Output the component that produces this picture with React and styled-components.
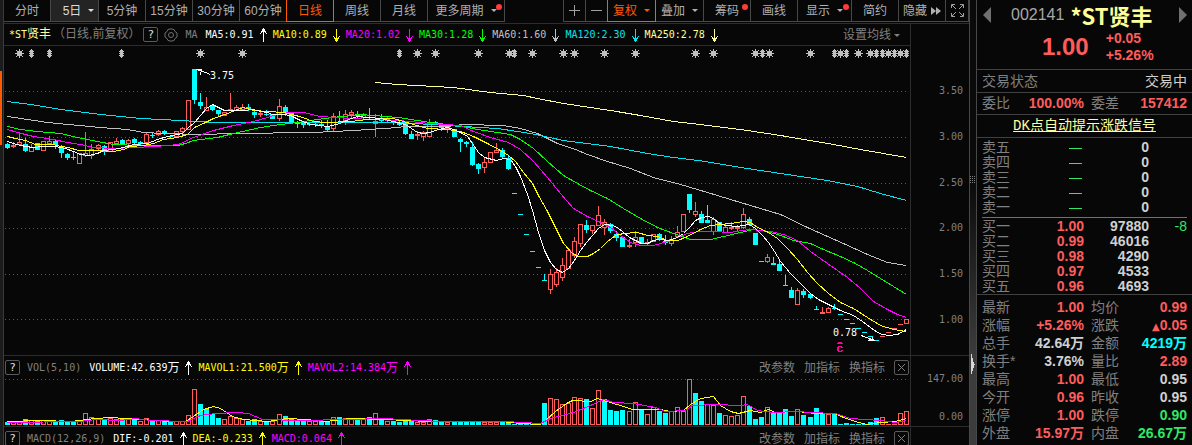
import React from "react";
import styled, { createGlobalStyle } from "styled-components";

const UP = "#ff5c5c";
const DOWN = "#00ffff";

// direction, high, body top, body bottom, low, volume top, volume direction (when it differs)
const candles = [
  ["d", 143, 144, 148, 149, 422], ["u", 142, 145, 147, 148, 421], ["u", 134, 142, 145, 145, 422],
  ["d", 138, 144, 151, 152, 419], ["u", 144, 147, 152, 152, 420], ["d", 143, 143, 150, 150, 421],
  ["u", 141, 141, 151, 151, 420], ["u", 136, 141, 144, 144, 421], ["d", 140, 141, 145, 149, 421],
  ["d", 145, 146, 153, 158, 420], ["d", 153, 154, 158, 160, 421], ["d", 152, 157, 158, 160, 422],
  ["u", 153, 153, 164, 164, 420], ["u", 132, 153, 156, 157, 413], ["u", 144, 149, 156, 159, 417],
  ["u", 144, 145, 149, 150, 418], ["d", 145, 146, 152, 155, 419], ["u", 142, 142, 152, 152, 418],
  ["u", 138, 141, 144, 145, 419], ["d", 139, 140, 144, 145, 419], ["u", 139, 140, 144, 145, 419],
  ["d", 138, 139, 143, 144, 419], ["d", 141, 142, 144, 145, 421, "u"], ["u", 133, 134, 143, 143, 418],
  ["d", 133, 135, 136, 138, 421], ["u", 130, 131, 135, 136, 420], ["d", 130, 131, 134, 135, 421],
  ["d", 135, 136, 137, 138, 422], ["u", 131, 131, 137, 137, 421], ["u", 127, 128, 132, 133, 421],
  ["u", 100, 100, 130, 130, 415], ["d", 69, 69, 100, 104, 389, "u"], ["d", 93, 102, 106, 109, 404],
  ["u", 97, 107, 111, 111, 409, "d"], ["d", 104, 105, 110, 111, 414], ["d", 110, 110, 114, 116, 418],
  ["u", 112, 112, 116, 116, 419], ["u", 93, 109, 111, 111, 416], ["u", 105, 107, 111, 111, 418],
  ["u", 104, 107, 110, 110, 419], ["d", 104, 107, 109, 111, 421], ["d", 111, 112, 115, 118, 419],
  ["u", 110, 113, 115, 117, 421], ["d", 110, 114, 115, 116, 421], ["d", 114, 114, 119, 119, 421, "u"],
  ["u", 99, 106, 119, 121, 414], ["d", 105, 107, 113, 116, 416], ["d", 113, 113, 123, 123, 419],
  ["d", 121, 123, 124, 128, 420], ["d", 121, 123, 125, 128, 421], ["d", 122, 124, 125, 126, 421, "u"],
  ["d", 122, 124, 125, 127, 421, "u"], ["d", 120, 124, 125, 128, 421], ["d", 120, 127, 130, 131, 421],
  ["u", 113, 116, 129, 131, 417], ["d", 111, 116, 117, 123, 417], ["u", 110, 114, 121, 125, 418],
  ["u", 110, 112, 115, 118, 418], ["d", 111, 114, 116, 119, 418], ["u", 113, 115, 118, 119, 419],
  ["d", 108, 117, 118, 120, 417], ["u", 114, 121, 124, 137, 413], ["d", 114, 119, 121, 123, 418],
  ["u", 117, 119, 121, 122, 421], ["d", 120, 121, 123, 125, 421], ["d", 120, 122, 125, 126, 422],
  ["d", 122, 123, 134, 135, 420], ["d", 131, 134, 139, 139, 421], ["u", 131, 134, 136, 140, 422],
  ["u", 131, 132, 137, 141, 422], ["u", 119, 122, 137, 137, 419], ["d", 121, 122, 124, 125, 420],
  ["d", 123, 124, 128, 131, 422], ["u", 125, 127, 129, 133, 422], ["d", 129, 129, 137, 137, 422],
  ["d", 138, 139, 142, 152, 422], ["d", 141, 142, 144, 147, 422], ["d", 142, 147, 165, 166, 422],
  ["d", 163, 164, 169, 174, 422], ["u", 158, 162, 168, 173, 422], ["u", 152, 152, 163, 163, 422],
  ["u", 143, 150, 153, 153, 422], ["d", 148, 150, 157, 158, 422], ["d", 156, 158, 169, 170, 423],
  ["d", 193, 193, 194, 194, 424], ["d", 214, 214, 215, 215, 424], ["d", 234, 234, 235, 235, 424],
  ["d", 251, 251, 252, 252, 424], ["d", 267, 267, 268, 268, 424], ["d", 274, 280, 281, 281, 403],
  ["u", 269, 274, 290, 294, 398], ["u", 268, 272, 285, 287, 399], ["u", 258, 265, 278, 281, 404],
  ["u", 250, 250, 269, 269, 403], ["u", 237, 241, 256, 258, 397], ["u", 224, 224, 244, 247, 398],
  ["d", 220, 225, 230, 233, 399], ["u", 225, 225, 231, 234, 408], ["u", 206, 215, 226, 226, 390],
  ["u", 219, 222, 228, 235, 399, "d"], ["d", 223, 224, 231, 233, 410], ["d", 231, 234, 238, 241, 411],
  ["d", 237, 237, 247, 247, 410], ["u", 239, 245, 247, 248, 411], ["u", 231, 237, 243, 247, 402],
  ["d", 237, 237, 244, 244, 410], ["u", 239, 242, 244, 245, 414], ["u", 234, 234, 242, 242, 407],
  ["d", 233, 234, 240, 241, 411], ["d", 235, 241, 243, 245, 413], ["u", 236, 239, 244, 246, 411],
  ["u", 226, 232, 237, 238, 407], ["u", 214, 214, 232, 232, 411], ["d", 194, 194, 210, 213, 379, "u"],
  ["u", 202, 211, 215, 217, 393, "d"], ["d", 211, 214, 223, 223, 401], ["d", 205, 220, 223, 223, 404, "u"],
  ["u", 217, 219, 232, 235, 405], ["d", 222, 222, 231, 231, 413], ["u", 224, 227, 233, 233, 415],
  ["u", 222, 227, 229, 230, 416], ["u", 225, 227, 229, 231, 415], ["u", 208, 214, 228, 229, 396],
  ["d", 217, 219, 225, 226, 406], ["d", 233, 233, 245, 245, 419], ["d", 261, 261, 262, 262, 417],
  ["u", 254, 257, 262, 263, 407], ["d", 257, 263, 265, 265, 412], ["d", 261, 264, 271, 271, 412],
  ["d", 275, 285, 286, 286, 409], ["d", 287, 290, 298, 298, 416], ["u", 288, 290, 305, 305, 409],
  ["d", 289, 291, 295, 298, 415], ["d", 293, 294, 298, 299, 417], ["d", 306, 309, 310, 310, 408],
  ["u", 307, 312, 314, 314, 413, "d"], ["u", 307, 308, 313, 313, 414], ["d", 304, 308, 309, 310, 413],
  ["d", 314, 314, 315, 315, 424], ["d", 319, 319, 320, 320, 423], ["d", 323, 323, 324, 324, 424],
  ["d", 328, 328, 329, 329, 424], ["d", 332, 332, 333, 333, 424], ["d", 336, 336, 337, 337, 422],
  ["d", 340, 340, 341, 341, 418], ["u", 336, 336, 337, 337, 417], ["u", 332, 332, 333, 333, 424],
  ["u", 328, 328, 329, 329, 424], ["u", 324, 324, 325, 325, 413], ["u", 319, 319, 324, 324, 411],
];

const priceLines = [
  ["#ffff99", "375,82 397,84 453,87 490,92 523,95 537,98 563,103 610,110 640,115 673,121 700,124 747,130 780,135 833,144 860,149 906,157"],
  ["#c0c0c0", "7,116 27,119 47,122 100,127 127,129 143,132 163,133 200,134 233,133 313,132 353,130 398,127 403,126 447,126 463,124 503,125 520,128 537,133 557,143 575,149 587,154 607,161 630,168 653,177 680,184 707,192 730,199 760,208 780,214 807,227 827,236 843,243 867,254 887,262 906,265"],
  ["#00e5ee", "7,101 30,104 60,109 100,114 140,118 180,120 215,122 398,122 430,124 463,126 497,128 530,133 563,140 610,146 647,153 673,157 698,160 740,167 780,173 827,180 857,186 880,193 906,200"],
  ["#00ff00", "7,126 20,129 37,131 60,133 77,137 97,141 113,144 140,145 177,145 185,143 193,140 217,137 233,133 260,127 280,124 297,122 317,119 333,117 360,114 398,117 410,119 430,122 463,126 477,129 497,132 510,134 520,139 533,148 547,161 563,175 577,183 590,190 607,198 623,208 640,218 657,227 673,233 690,239 710,239 723,236 740,232 753,229 767,231 780,235 793,240 810,243 823,249 840,256 855,263 867,270 880,278 893,286 906,294"],
  ["#ff00ff", "7,129 17,132 33,136 53,139 67,142 80,144 93,147 113,148 133,147 155,146 178,144 193,137 213,130 233,125 253,121 267,117 283,112 303,112 320,116 350,118 373,119 398,120 430,123 460,125 473,131 490,137 508,142 520,149 533,161 547,177 560,193 573,208 587,216 600,222 610,227 620,235 630,242 640,245 653,245 667,241 677,237 687,233 698,231 713,231 730,232 742,230 750,229 760,230 770,231 783,234 797,240 810,251 827,263 847,277 860,288 873,301 887,309 897,314 906,317"],
  ["#ffff00", "7,136 15,138 25,140 35,144 53,144 60,146 68,147 78,150 97,150 113,151 123,149 130,146 143,145 153,143 163,139 177,137 187,134 194,127 203,123 213,118 227,113 237,109 243,107 253,110 267,111 283,112 292,114 302,117 313,121 325,122 350,121 367,119 393,118 403,121 413,124 427,128 447,129 460,131 473,136 487,143 500,150 508,155 515,161 523,172 532,183 538,195 547,211 555,227 563,243 572,253 578,256 587,256 593,253 600,248 607,241 615,235 623,233 637,232 647,235 657,236 667,240 677,240 685,237 700,229 710,225 730,223 743,221 750,222 757,227 768,232 777,238 787,248 797,259 807,272 817,283 828,293 840,302 853,308 867,317 880,325 893,329 906,331"],
  ["#ffffff", "7,141 13,143 20,145 32,147 43,146 55,146 65,148 73,151 80,154 88,155 97,153 103,150 113,149 123,147 133,144 147,143 157,139 167,136 177,134 182,133 188,127 194,122 200,115 206,108 212,104 218,107 224,110 243,110 253,109 260,111 267,112 272,114 283,114 290,115 300,120 310,124 318,125 328,126 339,123 351,118 357,116 380,118 393,121 405,124 411,128 417,132 423,133 429,132 438,129 447,127 453,129 460,132 467,136 472,143 478,152 484,157 496,160 503,158 510,159 515,166 520,176 527,194 532,210 538,232 544,250 550,262 556,269 562,272 568,268 574,260 580,250 586,242 592,235 598,228 604,224 612,225 617,227 623,232 629,237 635,240 641,243 647,243 653,240 659,239 668,240 677,237 683,233 689,227 695,220 701,217 708,216 713,218 719,223 725,225 737,226 749,224 755,228 762,235 768,242 774,251 780,261 790,273 800,283 810,293 818,299 830,305 840,310 853,315 862,321 870,327 877,332 882,334 888,335 897,334 906,329"],
];

const volumeLines = [
  ["#ffff00", "7,421 40,420 70,421 95,418 110,417 140,419 170,421 185,421 193,416 203,409 213,406 220,408 232,416 243,419 267,421 287,418 305,419 325,421 350,418 385,419 405,420 430,421 500,421 520,423 540,424 545,420 555,411 566,403 572,400 590,401 597,398 603,400 620,405 632,409 660,409 670,411 683,410 690,404 700,398 713,396 720,405 730,411 738,413 750,410 760,412 768,409 775,412 797,411 815,413 835,413 843,417 855,421 866,424 880,422 895,421 906,418"],
  ["#ff00ff", "7,422 80,421 95,419 120,420 135,418 150,420 187,421 200,415 215,413 237,412 248,413 262,419 300,420 345,419 385,418 400,419 440,421 505,421 540,423 550,418 573,412 590,405 603,399 613,402 633,403 655,407 665,411 685,410 692,405 715,404 740,405 747,404 757,410 772,412 797,411 810,412 835,413 850,418 880,420 895,422 906,420"],
];

const starMarks = [19, 200, 242, 417, 435, 478, 509, 532, 563, 574, 604, 635, 695, 713, 755, 769, 810, 840, 858, 870, 888, 900];
const pinMarks = [31, 49, 121, 399, 514, 762, 834, 846, 876, 882, 894, 906];

const periods = [
  { text: "分时", width: 47 },
  { text: "5日", width: 48, caret: true, pressed: true },
  { text: "5分钟", width: 47 },
  { text: "15分钟", width: 47 },
  { text: "30分钟", width: 47 },
  { text: "60分钟", width: 47 },
  { text: "日线", width: 47, active: true },
  { text: "周线", width: 47 },
  { text: "月线", width: 47 },
  { text: "更多周期", width: 77, caret: true, dot: true },
];

const tools = [
  { text: "复权", width: 48, caret: true, active: true },
  { text: "叠加", width: 48, caret: true },
  { text: "筹码", width: 47, dot: true },
  { text: "画线", width: 47 },
  { text: "显示", width: 54, caret: true, dot: true },
  { text: "简约", width: 47 },
];

const averages = [
  ["MA5:0.91", "#ffffff", true],
  ["MA10:0.89", "#ffff00"],
  ["MA20:1.02", "#ff00ff"],
  ["MA30:1.28", "#00ff00"],
  ["MA60:1.60", "#c0c0c0"],
  ["MA120:2.30", "#00e5ee"],
  ["MA250:2.78", "#ffff99"],
];

const sells = ["卖五", "卖四", "卖三", "卖二", "卖一"];
const buys = [
  ["买一", "1.00", "97880", "-8"],
  ["买二", "0.99", "46016", ""],
  ["买三", "0.98", "4290", ""],
  ["买四", "0.97", "4533", ""],
  ["买五", "0.96", "4693", ""],
];

const RED = "#ff5c5c";
const WHITE = "#d0d0d0";
const GREEN = "#33e665";

const stats = [
  ["最新", "1.00", RED, "均价", "0.99", RED],
  ["涨幅", "+5.26%", RED, "涨跌", "0.05", RED, true],
  ["总手", "42.64万", WHITE, "金额", "4219万", "#00ffff"],
  ["换手*", "3.76%", WHITE, "量比", "2.89", RED],
  ["最高", "1.00", RED, "最低", "0.95", WHITE],
  ["今开", "0.96", RED, "昨收", "0.95", WHITE],
  ["涨停", "1.00", RED, "跌停", "0.90", GREEN],
  ["外盘", "15.97万", RED, "内盘", "26.67万", GREEN],
];

const columnX = (i) => Math.round(7 + i * 6.034);

const Arrow = ({ up }) => (
  <ArrowSvg width="19" height="14" viewBox="0 0 19 14">
    {up ? (
      <path d="M9.5 0v14M8.5 1v3M10.5 1v3M7.5 3v2M11.5 3v2M6.5 5v1M12.5 5v1" />
    ) : (
      <path d="M9.5 1v13M8.5 10v3M10.5 10v3M7.5 9v2M11.5 9v2M6.5 8v1M12.5 8v1" />
    )}
  </ArrowSvg>
);

const ToolButton = ({ text, caret, dot, ...rest }) => (
  <Tool $width={rest.width} $active={rest.active} $pressed={rest.pressed}>
    {text}
    {caret && <Caret />}
    {dot && <Dot />}
  </Tool>
);

const IndicatorActions = () => (
  <Actions>
    <TextButton>改参数</TextButton>
    <TextButton>加指标</TextButton>
    <TextButton>换指标</TextButton>
    <BoxButton aria-label="关闭">
      <svg width="9" height="9" viewBox="0 0 9 9">
        <path d="M1 1l7 7M8 1l-7 7" stroke="#808080" fill="none" />
      </svg>
    </BoxButton>
  </Actions>
);

const PriceChart = () => (
  <Drawing viewBox="4 46 906 309">
    {[91, 137, 183, 228, 274, 319].map((y) => (
      <line key={y} x1="5" x2="909" y1={y + 0.5} y2={y + 0.5} stroke="#5a5a5a" strokeDasharray="1 3" />
    ))}
    {candles.map(([dir, high, top, bottom, low], i) => {
      const x = columnX(i);
      const color = dir === "u" ? UP : DOWN;
      const hollow = dir === "u" && bottom - top > 2;
      return (
        <g key={i} fill={color}>
          <rect x={x} y={high} width="1" height={low - high} />
          <rect x={x - 2} y={top} width="5" height={bottom - top} />
          {hollow && <rect x={x - 1} y={top + 1} width="3" height={bottom - top - 2} fill="#070707" />}
        </g>
      );
    })}
    {priceLines.map(([color, points]) => (
      <polyline key={color} points={points} fill="none" stroke={color} transform="translate(0.5 0.5)" />
    ))}
    <g fill="#c0c0c0">
      {starMarks.map((x) => (
        <path key={x} d={`M${x - 2} 51h5v5h-5zM${x} 49h1v9h-1zM${x - 4} 53h9v1h-9zM${x - 3} 50h1v1h-1zM${x + 3} 50h1v1h-1zM${x - 3} 56h1v1h-1zM${x + 3} 56h1v1h-1z`} />
      ))}
      {pinMarks.map((x) => (
        <path key={x} d={`M${x} 49h1v9h-1zM${x - 1} 50h3v7h-3zM${x - 2} 51h5v1h-5zM${x - 2} 53h5v1h-5zM${x - 2} 55h5v1h-5z`} />
      ))}
    </g>
    <path d="M210 74.5l-4-2-10-3M196 69.5h6M198 70.5h4M200 71.5v3" fill="none" stroke="#fff" />
    <ChartText x="210" y="79" fill="#fff">3.75</ChartText>
    <path d="M861 335.5l14 5M868 340.5h7M869 339.5h5M872 337v4" fill="none" stroke="#fff" />
    <ChartText x="833" y="336" fill="#fff">0.78</ChartText>
    <path d="M837 344h6v-1h-1v-1h-4v1h-1z" fill="#ff0096" />
    <path d="M838 346h4v1h1v1h-2v-1h-2v4h2v-1h2v1h-1v1h-4v-1h-1v-4h1z" fill="#ff0096" />
  </Drawing>
);

const VolumeChart = () => (
  <Drawing viewBox="4 379 906 47">
    <line x1="5" x2="909" y1="379.5" y2="379.5" stroke="#5a5a5a" strokeDasharray="1 3" />
    {candles.map(([dir, , , , , top, volDir], i) => {
      const x = columnX(i);
      const rising = (volDir || dir) === "u";
      return (
        <g key={i} fill={rising ? UP : DOWN}>
          <rect x={x - 2} y={top} width="5" height={425 - top} />
          {rising && top < 423 && <rect x={x - 1} y={top + 1} width="3" height={423 - top} fill="#070707" />}
        </g>
      );
    })}
    {volumeLines.map(([color, points]) => (
      <polyline key={color} points={points} fill="none" stroke={color} transform="translate(0.5 0.5)" />
    ))}
  </Drawing>
);

const App = () => {
  return (
    <>
      <GlobalStyle />
      <Screen>
        <Rail>
          <RailMark />
        </Rail>
        <Main>
          <Toolbar>
            {periods.map((p) => (
              <ToolButton key={p.text} {...p} />
            ))}
            <Spacer />
            <Tool $width={23} $first aria-label="放大">
              <svg width="11" height="11"><path d="M5.5 0v11M0 5.5h11" stroke="#a0a0a0" /></svg>
            </Tool>
            <Tool $width={22} aria-label="缩小">
              <svg width="11" height="11"><path d="M0 5.5h11" stroke="#a0a0a0" /></svg>
            </Tool>
            {tools.map((t) => (
              <ToolButton key={t.text} {...t} />
            ))}
            <Tool $width={47}>
              隐藏
              <svg width="10" height="8" viewBox="0 0 10 8"><path d="M0 0l5 4-5 4zM5 0l5 4-5 4z" fill="#b0b0b0" /></svg>
            </Tool>
            <Tool $width={23} aria-label="全屏">
              <svg width="13" height="13" viewBox="0 0 13 13">
                <path d="M.5 4V.5H4M9 .5h3.500V4M12.500 9v3.500H9M4 12.500H.5V9M1 1l4 4M12 1L8 5M12 12L8 8M1 12l4-4" stroke="#a0a0a0" fill="none" />
              </svg>
            </Tool>
          </Toolbar>

          <Panel>
            <Plot>
              <InfoRow $line>
                <StockName>*ST<Han>贤丰</Han></StockName>
                <Muted><Han>（日线,前复权）</Han></Muted>
                <BoxButton>?</BoxButton>
                <GearButton aria-label="设置">
                  <svg width="14" height="14" viewBox="0 0 14 14" fill="none" stroke="#707070">
                    <path d="M4 1.500L7 .8l3 .7 1 2 2 1.500v4l-2 1.500-1 2-3 .7-3-.7-1-2L1 9V5l2-1.500z" />
                    <circle cx="7" cy="7" r="2.500" />
                  </svg>
                </GearButton>
                <Muted>MA</Muted>
                <Values>
                  {averages.map(([text, color, up]) => (
                    <Value key={text} $color={color}>
                      {text}
                      <Arrow up={up} />
                    </Value>
                  ))}
                </Values>
                <Spacer />
                <TextButton>设置均线<Caret /></TextButton>
              </InfoRow>
              <PriceChart />
            </Plot>
            <Axis $top={44}>
              <PriceLabels>
                {["3.50", "3.00", "2.50", "2.00", "1.50", "1.00"].map((p) => (
                  <span key={p}>{p}</span>
                ))}
              </PriceLabels>
            </Axis>
          </Panel>

          <Panel>
            <Plot>
              <InfoRow>
                <BoxButton>?</BoxButton>
                <Muted>VOL(5,10)</Muted>
                <Values>
                  <Value $color="#ffffff">VOLUME:42.639<Han>万</Han><Arrow up /></Value>
                  <Value $color="#ffff00">MAVOL1:21.500<Han>万</Han><Arrow up /></Value>
                  <Value $color="#ff00ff">MAVOL2:14.384<Han>万</Han><Arrow up /></Value>
                </Values>
                <Spacer />
                <IndicatorActions />
              </InfoRow>
              <VolumeChart />
            </Plot>
            <Axis $top={15}>
              <VolumeLabels>
                <span>147.00</span>
                <span>0.00</span>
              </VolumeLabels>
            </Axis>
          </Panel>

          <Panel>
            <Plot>
              <InfoRow>
                <BoxButton>?</BoxButton>
                <Muted>MACD(12,26,9)</Muted>
                <Values>
                  <Value $color="#ffffff">DIF:-0.201<Arrow up /></Value>
                  <Value $color="#ffff00">DEA:-0.233<Arrow up /></Value>
                  <Value $color="#ff00ff">MACD:0.064<Arrow up /></Value>
                </Values>
                <Spacer />
                <IndicatorActions />
              </InfoRow>
            </Plot>
            <Axis $top={0} />
          </Panel>
        </Main>

        <Splitter>
          <svg width="6" height="9" fill="#808080">
            <path d="M0 0h1v1H0zM2 0h1v1H2zM4 0h1v1H4zM0 2h1v1H0zM2 2h1v1H2zM4 2h1v1H4zM0 4h1v1H0zM2 4h1v1H2zM4 4h1v1H4zM0 6h1v1H0zM2 6h1v1H2zM4 6h1v1H4z" />
          </svg>
          <svg width="6" height="20" viewBox="0 0 6 20">
            <path d="M1 0h1v4h1v4h1v2h1v1H4v3H3v3H2v3H1z" fill="#d8d8d8" />
          </svg>
        </Splitter>

        <Side>
          <Title>
            <Step aria-label="上一只">
              <svg width="8" height="16"><path d="M8 0v16L0 8z" fill="#707070" /></svg>
            </Step>
            <Code>002141</Code>
            <Name>*ST贤丰</Name>
            <Spacer />
            <Step aria-label="下一只">
              <svg width="8" height="16"><path d="M0 0v16l8-8z" fill="#707070" /></svg>
            </Step>
          </Title>
          <Quote>
            <Price>1.00</Price>
            <Change>
              <span>+0.05</span>
              <span>+5.26%</span>
            </Change>
          </Quote>
          <StateRow>
            <span>交易状态</span>
            <b>交易中</b>
          </StateRow>
          <Table $row={21}>
            <tbody>
              <tr>
                <Label>委比</Label>
                <Num $color={RED}>100.00%</Num>
                <Label $second>委差</Label>
                <Num $color={RED}>157412</Num>
              </tr>
            </tbody>
          </Table>
          <SignalRow>
            <a href="#signal">DK点自动提示涨跌信号</a>
          </SignalRow>
          <Book $sell>
            <tbody>
              {sells.map((name) => (
                <tr key={name}>
                  <Label>{name}</Label>
                  <Num $color={GREEN}><Dash /></Num>
                  <Num $color={WHITE}>0</Num>
                  <Num />
                </tr>
              ))}
            </tbody>
          </Book>
          <BookLine />
          <Book>
            <tbody>
              {buys.map(([name, price, lots, diff]) => (
                <tr key={name}>
                  <Label>{name}</Label>
                  <Num $color={RED}>{price}</Num>
                  <Num $color={WHITE}>{lots}</Num>
                  <Num $color={GREEN} $plain>{diff}</Num>
                </tr>
              ))}
            </tbody>
          </Book>
          <Table $row={18} $top={3}>
            <tbody>
              {stats.map(([a, av, ac, b, bv, bc, rise]) => (
                <tr key={a}>
                  <Label>{a}</Label>
                  <Num $color={ac}>{av}</Num>
                  <Label $second>{b}</Label>
                  <Num $color={bc}>
                    {rise && <Rise>▲</Rise>}
                    {bv}
                  </Num>
                </tr>
              ))}
            </tbody>
          </Table>
        </Side>
      </Screen>
    </>
  );
};

export default App;

const GlobalStyle = createGlobalStyle`
  * {
    box-sizing: border-box;
  }
  body {
    margin: 0;
    background: #070707;
    font-family: "Liberation Sans", "Noto Sans CJK SC", sans-serif;
  }
  button {
    padding: 0;
    margin: 0;
    border: none;
    background: none;
    font: inherit;
    color: inherit;
    cursor: pointer;
  }
`;

const Screen = styled.div`
  display: flex;
  height: 100vh;
  overflow: hidden;
  background: #070707;
`;

const Rail = styled.div`
  flex: none;
  width: 4px;
  padding-top: 71px;
  background: #1c1c1c;
  border-right: 1px solid #3a3a3a;
`;

const RailMark = styled.div`
  width: 2px;
  height: 74px;
  background: #ff5a00;
`;

const Main = styled.main`
  flex: 1;
  min-width: 0;
  display: flex;
  flex-direction: column;
`;

const Toolbar = styled.nav`
  flex: none;
  display: flex;
  height: 24px;
  border-bottom: 1px solid #2c2c2c;
`;

const Spacer = styled.div`
  flex: 1;
`;

const Tool = styled.button`
  && {
    flex: none;
    position: relative;
    display: flex;
    align-items: center;
    justify-content: center;
    gap: 4px;
    width: ${(p) => p.$width}px;
    height: 22px;
    border-right: 1px solid #484848;
    border-bottom: 1px solid #484848;
    font-size: 12px;
    line-height: 20px;
    white-space: nowrap;
    color: #b0b0b0;
    ${(p) => p.$first && "border-left: 1px solid #484848;"}
    ${(p) => p.$pressed && "background: #242424; color: #dcdcdc; padding-left: 8px;"}
    ${(p) => p.$active && `
      width: ${p.$width + 1}px;
      margin-left: -1px;
      border: 1px solid #ff5a00;
      border-top: none;
      color: #ff5a00;
    `}
  }
`;

const Caret = styled.i`
  display: inline-block;
  margin-left: 3px;
  border: 3px solid transparent;
  border-top-color: currentColor;
  border-bottom: none;
  vertical-align: middle;
`;

const Dot = styled.i`
  position: absolute;
  top: 4px;
  right: 2px;
  width: 6px;
  height: 6px;
  border-radius: 50%;
  background: #ff3b3b;
`;

const Panel = styled.section`
  flex: none;
  display: grid;
  grid-template-columns: 1fr 59px;
  border-bottom: 1px solid #2c2c2c;
`;

const Plot = styled.div`
  min-width: 0;
`;

const InfoRow = styled.div`
  display: flex;
  align-items: center;
  height: ${(p) => (p.$line ? 22 : 23)}px;
  padding: 0 1px;
  border-bottom: ${(p) => (p.$line ? "1px solid #2c2c2c" : "none")};
  font-family: "DejaVu Sans Mono", "Noto Sans CJK SC", monospace;
  font-size: 10px;
  line-height: 20px;
  white-space: nowrap;
`;

const Han = styled.span`
  font-family: "Liberation Sans", "Noto Sans CJK SC", sans-serif;
  font-size: 12px;
`;

const StockName = styled.span`
  padding-left: 4px;
  color: #ffff99;
`;

const Muted = styled.span`
  margin-left: 7px;
  color: #808080;

  ${StockName} + & {
    margin-left: 2px;
    margin-right: 3px;
  }
`;

const Values = styled.div`
  display: flex;
  margin-left: 8px;
`;

const Value = styled.span`
  display: flex;
  align-items: center;
  color: ${(p) => p.$color};
`;

const ArrowSvg = styled.svg`
  stroke: currentColor;
  fill: none;
  shape-rendering: crispEdges;
`;

const BoxButton = styled.button`
  && {
    flex: none;
    display: flex;
    align-items: center;
    justify-content: center;
    width: 15px;
    height: 15px;
    border: 1px solid #5a5a5a;
    border-radius: 2px;
    font-size: 11px;
    line-height: 13px;
    color: #e0e0e0;
  }
`;

const GearButton = styled.button`
  && {
    display: flex;
    margin-left: 6px;
  }
`;

const TextButton = styled.button`
  && {
    font-family: "Liberation Sans", "Noto Sans CJK SC", sans-serif;
    font-size: 12px;
    line-height: 20px;
    color: #808080;
  }

  ${InfoRow} > & {
    margin-right: 9px;
  }
`;

const Actions = styled.div`
  display: flex;
  align-items: center;
  gap: 9px;
`;

const Drawing = styled.svg`
  display: block;
  width: 100%;
  height: auto;
  shape-rendering: crispEdges;
`;

const ChartText = styled.text`
  font-family: "DejaVu Sans Mono", monospace;
  font-size: 10px;
`;

const Axis = styled.div`
  padding: ${(p) => p.$top}px 6px 0 0;
  border-left: 1px solid #2c2c2c;
  font-family: "DejaVu Sans Mono", monospace;
  font-size: 10px;
  text-align: right;
  color: #808080;
`;

const PriceLabels = styled.div`
  display: grid;
  grid-template-rows: repeat(6, 1fr);
  align-items: center;
  height: 274px;
`;

const VolumeLabels = styled.div`
  display: flex;
  flex-direction: column;
  gap: 22px;
  line-height: 16px;
`;

const Splitter = styled.div`
  flex: none;
  display: flex;
  flex-direction: column;
  gap: 169px;
  width: 8px;
  padding-top: 176px;
  border-left: 1px solid #484848;
  border-right: 1px solid #484848;
  background: linear-gradient(#0a0a0a 40%, #3c3c3c 80%);
`;

const Side = styled.aside`
  flex: none;
  width: 215px;
`;

const Title = styled.header`
  display: flex;
  align-items: center;
  height: 30px;
  padding: 0 5px 0 6px;
`;

const Step = styled.button`
  && {
    display: flex;
  }
`;

const Code = styled.span`
  margin-left: 20px;
  font-size: 16px;
  color: #a8a8a8;
`;

const Name = styled.span`
  margin-left: 6px;
  font-family: "Noto Sans CJK SC", sans-serif;
  font-size: 22px;
  font-weight: bold;
  line-height: 30px;
  color: #ffff99;
`;

const Quote = styled.div`
  display: flex;
  align-items: center;
  gap: 17px;
  height: 40px;
  padding: 0 0 6px 65px;
  border-bottom: 1px solid #404040;
  color: ${RED};
`;

const Price = styled.strong`
  font-size: 24px;
  line-height: 32px;
`;

const Change = styled.div`
  display: flex;
  flex-direction: column;
  font-size: 14px;
  font-weight: bold;
  line-height: 17px;
`;

const StateRow = styled.div`
  display: flex;
  justify-content: space-between;
  height: 23px;
  padding: 0 5px;
  border-bottom: 1px solid #404040;
  font-size: 14px;
  line-height: 22px;
  color: #808080;

  b {
    font-weight: normal;
    color: #d0d0d0;
  }
`;

const Table = styled.table`
  width: 100%;
  table-layout: fixed;
  border-spacing: 0;
  border-bottom: ${(p) => (p.$top ? "none" : "1px solid #404040")};
  padding: ${(p) => p.$top || 0}px 5px 0;
  font-size: 14px;
  line-height: ${(p) => p.$row}px;

  td {
    padding: 0;
    height: ${(p) => p.$row}px;
    white-space: nowrap;
  }

  td:nth-child(1),
  td:nth-child(3) {
    width: 38px;
  }

  td:nth-child(2) {
    width: 64px;
  }
`;

const Label = styled.td`
  color: #808080;
  text-align: left;
  ${(p) => p.$second && "&& { padding-left: 7px; }"}
`;

const Num = styled.td`
  color: ${(p) => p.$color};
  font-weight: ${(p) => (p.$plain ? "normal" : "bold")};
  text-align: right;
`;

const Rise = styled.span`
  font-family: "DejaVu Sans", sans-serif;
  font-size: 10px;
  line-height: 10px;
`;

const Dash = styled.i`
  display: inline-block;
  width: 13px;
  height: 1px;
  margin-right: 2px;
  background: currentColor;
  vertical-align: middle;
`;

const SignalRow = styled.div`
  height: 23px;
  border-bottom: 1px solid #404040;
  text-align: center;
  font-family: "Liberation Mono", "Noto Sans CJK SC", monospace;
  font-size: 14px;
  line-height: 22px;

  a {
    color: #ffff99;
  }
`;

const Book = styled.table`
  width: 100%;
  table-layout: fixed;
  border-spacing: 0;
  padding: ${(p) => (p.$sell ? "2px 5px" : "1px 5px 0")};
  border-bottom: ${(p) => (p.$sell ? "none" : "1px solid #404040")};
  font-size: 14px;
  line-height: 15px;

  td {
    padding: 0;
    height: 15px;
    overflow: hidden;
  }

  td:nth-child(1) {
    width: 38px;
  }

  td:nth-child(2) {
    width: 64px;
  }

  td:nth-child(4) {
    width: 38px;
  }
`;

const BookLine = styled.div`
  height: 1px;
  margin: 0 5px;
  background: #707070;
`;
